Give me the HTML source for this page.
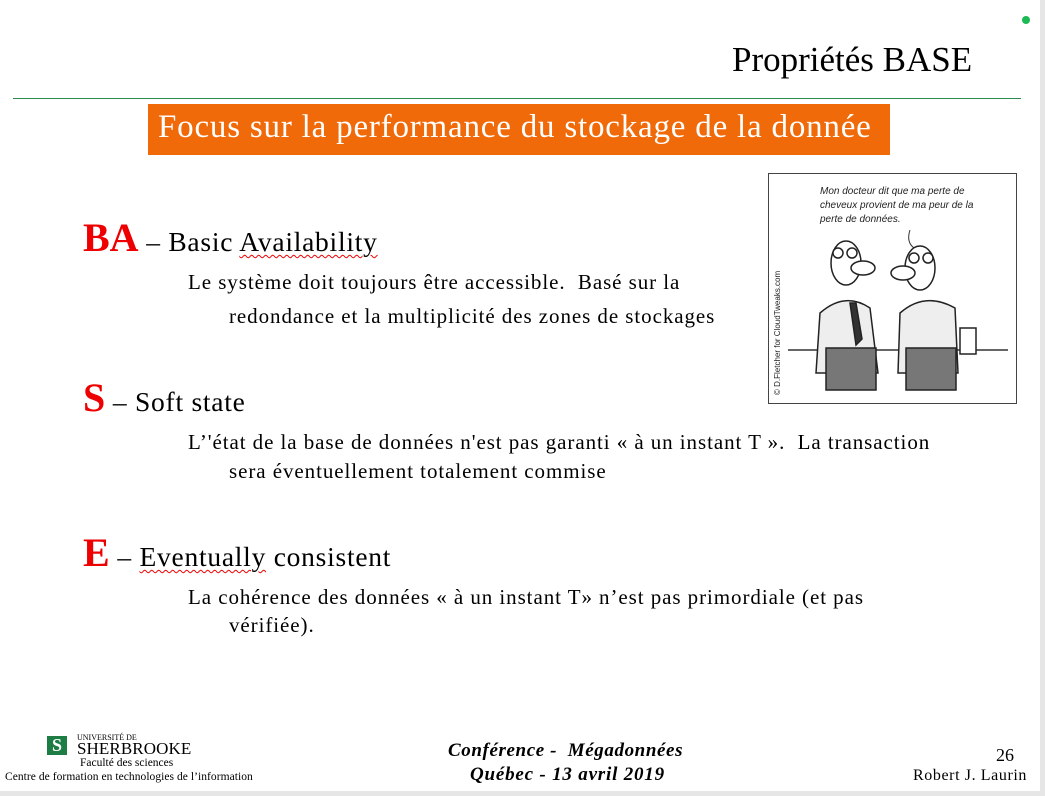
<!DOCTYPE html>
<html><head><meta charset="utf-8"><style>
body{margin:0;width:1045px;height:796px;background:#fff;position:relative;overflow:hidden;font-family:"Liberation Serif",serif;color:#000}
.a{position:absolute;white-space:nowrap}
.red{color:#e00;font-weight:bold;font-size:40px;letter-spacing:0}
.sq{text-decoration:underline wavy #e00;text-decoration-thickness:1px;text-underline-offset:3px}
.b{font-size:21px;letter-spacing:0.93px}
.h{font-size:27.5px;letter-spacing:0.75px}
</style></head><body>
<div class="a" style="left:1040px;top:0;width:5px;height:796px;background:#e6e6e6"></div>
<div class="a" style="left:0;top:791px;width:1045px;height:5px;background:#e6e6e6"></div>
<div class="a" style="left:1022px;top:16px;width:8px;height:8px;border-radius:50%;background:#1db954"></div>
<div class="a" style="left:732px;top:40px;font-size:35px;">Propriétés BASE</div>
<div class="a" style="left:13px;top:98px;width:1008px;height:1px;background:#2a8a50"></div>
<div class="a" style="left:148px;top:104px;width:742px;height:51px;background:#f06a0a"></div>
<div class="a" style="left:158px;top:109px;font-size:33px;letter-spacing:0.8px;color:#fff">Focus sur la performance du stockage de la donnée</div>

<div class="a h" style="left:83px;top:214px"><span class="red">BA</span> – Basic <span class="sq">Availability</span></div>
<div class="a b" style="left:188px;top:270px">Le système doit toujours être accessible.&nbsp; Basé sur la</div>
<div class="a b" style="left:229px;top:304px">redondance et la multiplicité des zones de stockages</div>

<div class="a h" style="left:83px;top:374px"><span class="red">S</span> – Soft state</div>
<div class="a b" style="left:188px;top:430px">L’'état de la base de données n'est pas garanti « à un instant T ».&nbsp; La transaction</div>
<div class="a b" style="left:229px;top:459px">sera éventuellement totalement commise</div>

<div class="a h" style="left:83px;top:529px"><span class="red">E</span> – <span class="sq">Eventually</span> consistent</div>
<div class="a b" style="left:188px;top:585px">La cohérence des données « à un instant T» n’est pas primordiale (et pas</div>
<div class="a b" style="left:229px;top:613px">vérifiée).</div>

<svg class="a" style="left:768px;top:173px" width="249" height="231" viewBox="0 0 249 231">
<rect x="0.5" y="0.5" width="248" height="230" fill="#fff" stroke="#444"/>
<text x="52" y="21" font-family="Liberation Sans,sans-serif" font-style="italic" font-size="10" fill="#222">Mon docteur dit que ma perte de</text>
<text x="52" y="35" font-family="Liberation Sans,sans-serif" font-style="italic" font-size="10" fill="#222">cheveux provient de ma peur de la</text>
<text x="52" y="49" font-family="Liberation Sans,sans-serif" font-style="italic" font-size="10" fill="#222">perte de données.</text>
<path d="M142 57 q-4 12 4 18" stroke="#333" fill="none"/>
<line x1="20" y1="177" x2="240" y2="177" stroke="#333" stroke-width="1.5"/>
<g stroke="#222" stroke-width="1.5">
<ellipse cx="78" cy="90" rx="15" ry="22" fill="#fff"/>
<ellipse cx="95" cy="95" rx="12" ry="7" fill="#fff"/>
<circle cx="70" cy="80" r="5" fill="#fff"/><circle cx="84" cy="80" r="5" fill="#fff"/>
<path d="M52 140 q25-22 50 -5 l8 65 h-62 z" fill="#eee"/>
<rect x="58" y="175" width="50" height="42" fill="#777"/>
<path d="M82 130 l6 42 l6-6 l-6-36z" fill="#333"/>
<ellipse cx="152" cy="95" rx="15" ry="22" fill="#fff"/>
<ellipse cx="135" cy="100" rx="12" ry="7" fill="#fff"/>
<circle cx="146" cy="85" r="5" fill="#fff"/><circle cx="160" cy="85" r="5" fill="#fff"/>
<path d="M132 140 q25-22 55 -5 l3 65 h-60 z" fill="#eee"/>
<rect x="138" y="175" width="50" height="42" fill="#777"/>
<rect x="192" y="155" width="16" height="26" fill="#fff"/>
</g>
<text transform="translate(12,222) rotate(-90)" font-family="Liberation Sans,sans-serif" font-size="8" fill="#222">© D.Fletcher for CloudTweaks.com</text>
</svg>

<div class="a" style="left:47px;top:736px;width:20px;height:19px;background:#1e7d45;color:#fff;font-size:18px;font-weight:bold;text-align:center;line-height:19px">S</div>
<div class="a" style="left:77px;top:733px;font-size:8px">UNIVERSITÉ DE</div>
<div class="a" style="left:77px;top:739px;font-size:17px;letter-spacing:0.1px">SHERBROOKE</div>
<div class="a" style="left:80px;top:757px;font-size:11.5px">Faculté des sciences</div>
<div class="a" style="left:5px;top:771px;font-size:11.5px;letter-spacing:0.05px">Centre de formation en technologies de l’information</div>
<div class="a" style="left:448px;top:740px;font-size:19px;letter-spacing:0.6px;font-weight:bold;font-style:italic">Conférence -&nbsp; Mégadonnées</div>
<div class="a" style="left:470px;top:764px;font-size:19px;letter-spacing:0.8px;font-weight:bold;font-style:italic">Québec - 13 avril 2019</div>
<div class="a" style="left:996px;top:745px;font-size:18px">26</div>
<div class="a" style="left:913px;top:767px;font-size:16px;letter-spacing:0.6px">Robert J. Laurin</div>
</body></html>
